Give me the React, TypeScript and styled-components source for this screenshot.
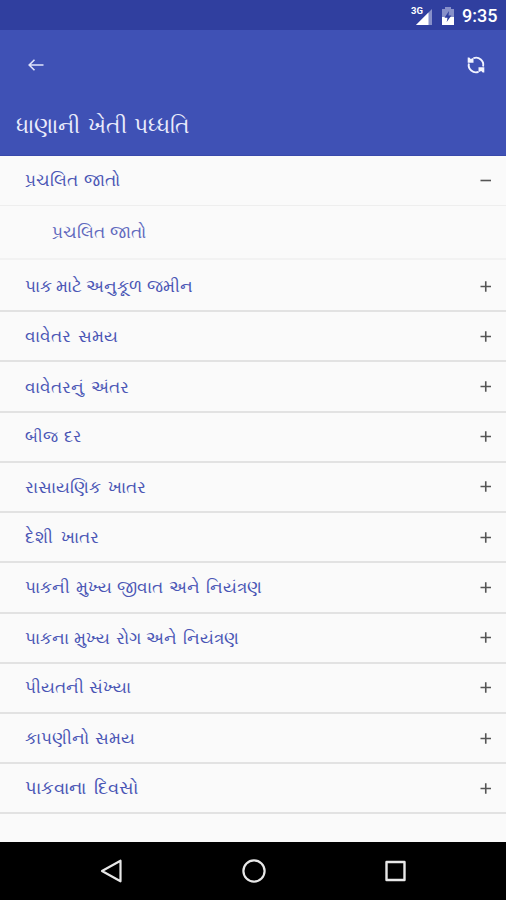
import React, { useState } from 'react';
import styled, { createGlobalStyle } from 'styled-components';

const GlobalStyle = createGlobalStyle`
  * { box-sizing: border-box; }
  body { margin: 0; background: #fafafa; }
  button { border: 0; background: none; padding: 0; margin: 0; font: inherit; color: inherit; text-align: left; }
  svg { display: block; }
`;

const Screen = styled.div`
  width: 506px;
  height: 900px;
  display: flex;
  flex-direction: column;
  overflow: hidden;
  background: #fafafa;
  font-family: Roboto, "Noto Sans", sans-serif;
`;

const StatusBar = styled.header`
  height: 30px;
  flex: none;
  display: flex;
  align-items: center;
  justify-content: flex-end;
  padding: 2px 9px 0 0;
  background: #303f9f;
  color: #fff;
`;

const Signal = styled.svg`
  width: 24px;
  height: 22px;
  margin-right: 6px;
`;

const Battery = styled.svg`
  width: 14px;
  height: 20px;
  margin-right: 7px;
`;

const Clock = styled.span`
  width: 35px;
  font-size: 18px;
  font-weight: 500;
  line-height: 28px;
  white-space: nowrap;
`;

const AppBar = styled.div`
  height: 126px;
  flex: none;
  display: flex;
  flex-direction: column;
  background: #3f51b5;
  border-bottom: 1px solid #3949ab;
  color: #fff;
`;

const Toolbar = styled.div`
  height: 69px;
  display: flex;
  align-items: center;
  justify-content: space-between;
  padding: 0 20px 0 26px;
`;

const Title = styled.h1`
  margin: 12px 0 0 16px;
  font-size: 21.8px;
  line-height: 30px;
  font-weight: 400;
  word-spacing: 2.2px;
  color: #e9ebfb;
  white-space: nowrap;
`;

const List = styled.main`
  flex: 1;
  display: flex;
  flex-direction: column;
`;

const Row = styled.button<{ $open?: boolean }>`
  width: 100%;
  height: ${p => (p.$open ? '49.6px' : '50.22px')};
  flex: none;
  display: flex;
  align-items: center;
  justify-content: space-between;
  padding: 0 14px 0 25px;
  border-bottom: ${p => (p.$open ? '1px solid #eeeeee' : '2px solid #e2e2e2')};
`;

const SubRow = styled.div`
  height: 54.4px;
  flex: none;
  display: flex;
  align-items: center;
  margin-bottom: 2px;
  padding-left: 52px;
  border-bottom: 2px solid #f2f2f2;
`;

const Label = styled.span<{ $sub?: boolean; $size: number; $gap: number }>`
  font-size: ${p => p.$size - (p.$sub ? 0.5 : 0)}px;
  word-spacing: ${p => p.$gap}px;
  line-height: 28px;
  color: ${p => (p.$sub ? '#6069be' : '#4a56b5')};
  white-space: nowrap;
`;

const Toggle = styled.svg`
  width: 13px;
  height: 13px;
  flex: none;
`;

const NavBar = styled.nav`
  height: 58px;
  flex: none;
  display: flex;
  align-items: center;
  justify-content: space-between;
  padding: 0 97px 0 98px;
  background: #000;
  color: #e8e8e8;
`;

const topics = [
  { name: 'પ્રચલિત જાતો', size: 17.3, gap: 2 },
  { name: 'પાક માટે અનુકૂળ જમીન', size: 16.9, gap: 0 },
  { name: 'વાવેતર સમય', size: 17.1, gap: 2.5 },
  { name: 'વાવેતરનું અંતર', size: 17.1, gap: 3 },
  { name: 'બીજ દર', size: 16.4, gap: 1.8 },
  { name: 'રાસાયણિક ખાતર', size: 16.9, gap: 2.5 },
  { name: 'દેશી ખાતર', size: 17.3, gap: 3.5 },
  { name: 'પાકની મુખ્ય જીવાત અને નિયંત્રણ', size: 16.8, gap: 1.5 },
  { name: 'પાકના મુખ્ય રોગ અને નિયંત્રણ', size: 16.9, gap: 1.3 },
  { name: 'પીયતની સંખ્યા', size: 16.6, gap: 1 },
  { name: 'કાપણીનો સમય', size: 16.9, gap: 2 },
  { name: 'પાકવાના દિવસો', size: 17.9, gap: 4 },
];

function ToggleIcon({ open }: { open: boolean }) {
  return (
    <Toggle viewBox="0 0 13 13" stroke="#555" strokeWidth="1.6">
      <path d={open ? 'M1.5 6.5h10.5' : 'M1.5 6.5h10.5M6.75 1.25v10.5'} />
    </Toggle>
  );
}

export default function App() {
  const [openIndex, setOpenIndex] = useState(0);
  return (
    <>
      <GlobalStyle />
      <Screen>
        <StatusBar>
          <Signal viewBox="0 0 24 22">
            <path d="M21 4v16H5z" fill="#8790c9" />
            <path d="M17.5 7.5V20H5z" fill="#fff" />
            <text x="0" y="9" fontSize="9.5" fontWeight="700" fontFamily="Roboto" fill="#fff" stroke="#303f9f" strokeWidth="1.2" paintOrder="stroke">3G</text>
          </Signal>
          <Battery viewBox="0 0 14 20">
            <path d="M1 3h3V1h6v2h3v16H1z" fill="#8790c9" />
            <path d="M1 11h12v8H1z" fill="#fff" />
            <path d="M8 5 3.5 11.7h3L5.7 16l4.7-6.5H7.5z" fill="#303f9f" />
          </Battery>
          <Clock>9:35</Clock>
        </StatusBar>
        <AppBar>
          <Toolbar>
            <button aria-label="Back">
              <svg width="20" height="20" viewBox="0 0 20 20" fill="none" stroke="#dfe3fb" strokeWidth="1.6">
                <path d="M17.5 10H3.5M8.5 4.7 3.2 10l5.3 5.3" />
              </svg>
            </button>
            <button aria-label="Refresh">
              <svg width="20" height="20" viewBox="0 0 20 20" fill="none" stroke="#f2f4ff" strokeWidth="1.9">
                <path d="M7.5 3.2A7.2 7.2 0 0 1 17.1 11.5M12.5 16.8A7.2 7.2 0 0 1 2.9 8.5" />
                <path d="M1.7 2.4h1.6l1.5 1.5 2.7-1.1v5H1.7zM18.3 17.6h-1.6l-1.5-1.5-2.7 1.1v-5h5.8z" fill="#f2f4ff" stroke="none" />
              </svg>
            </button>
          </Toolbar>
          <Title>ધાણાની ખેતી પધ્ધતિ</Title>
        </AppBar>
        <List>
          {topics.map(({ name, size, gap }, i) => (
            <React.Fragment key={name}>
              <Row $open={openIndex === i} onClick={() => setOpenIndex(openIndex === i ? -1 : i)}>
                <Label $size={size} $gap={gap}>{name}</Label>
                <ToggleIcon open={openIndex === i} />
              </Row>
              {openIndex === i && (
                <SubRow>
                  <Label $sub $size={size} $gap={gap - 1.5}>{name}</Label>
                </SubRow>
              )}
            </React.Fragment>
          ))}
        </List>
        <NavBar>
          <svg width="27" height="28" viewBox="0 0 27 28" fill="none" stroke="currentColor" strokeWidth="2.2" strokeLinejoin="round">
            <path d="M22.5 3.7v20.6L4 14z" />
          </svg>
          <svg width="28" height="28" viewBox="0 0 28 28" fill="none" stroke="currentColor" strokeWidth="2.2">
            <circle cx="14" cy="14" r="10.6" />
          </svg>
          <svg width="27" height="28" viewBox="0 0 27 28" fill="none" stroke="currentColor" strokeWidth="2.4" strokeLinejoin="round">
            <path d="M4.5 5h18v18h-18z" />
          </svg>
        </NavBar>
      </Screen>
    </>
  );
}
